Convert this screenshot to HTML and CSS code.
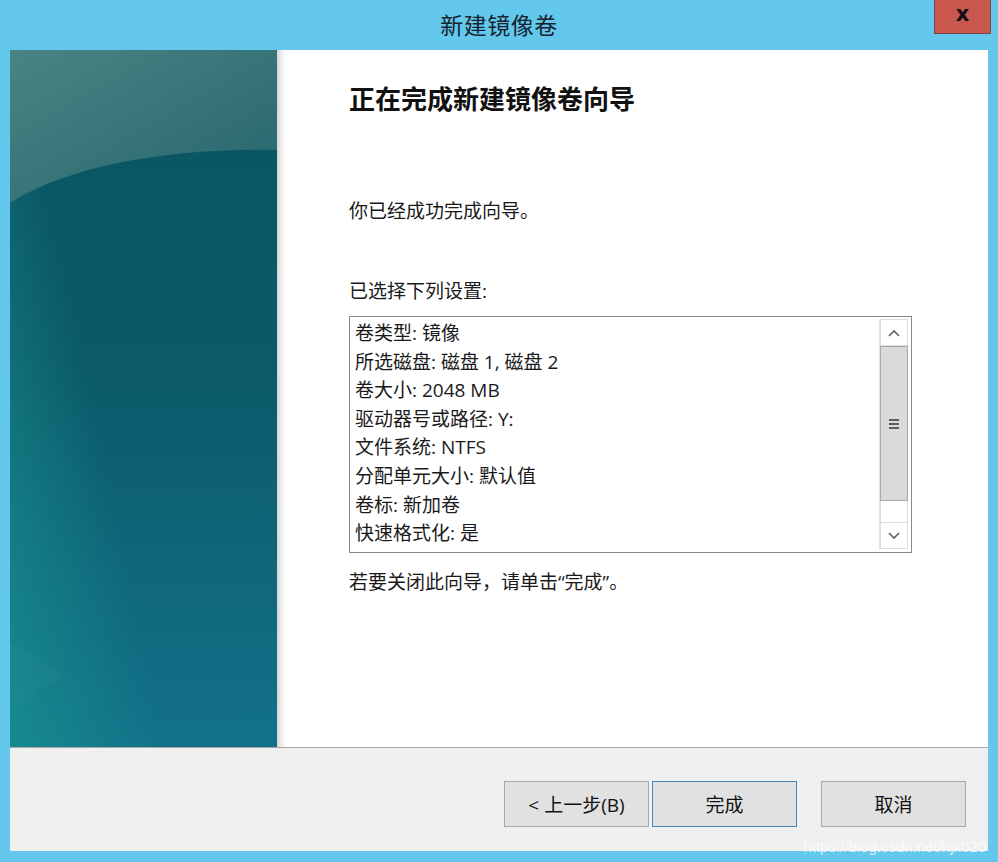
FILE: index.html
```html
<!DOCTYPE html>
<html lang="zh-CN">
<head>
    <meta charset="UTF-8">
    <title>新建镜像卷</title>
    <link rel="stylesheet" href="styles.css">
</head>
<body>
    <div class="window">
        <div class="titlebar">
            <div></div>
            <div class="title">新建镜像卷</div>
            <div class="close">x</div>
        </div>
        <div class="frame">
            <div class="main">
                <div class="side">
                    <svg width="267" height="697" viewBox="0 0 267 697" preserveAspectRatio="none">
                        <defs>
                            <linearGradient id="base" x1="0" y1="0" x2="0" y2="1">
                                <stop offset="0" stop-color="#0a5460"/>
                                <stop offset="0.45" stop-color="#0b5a68"/>
                                <stop offset="1" stop-color="#12718a"/>
                            </linearGradient>
                            <linearGradient id="glow" x1="0" y1="1" x2="0.45" y2="0.75">
                                <stop offset="0" stop-color="#18908f" stop-opacity="0.8"/>
                                <stop offset="1" stop-color="#18908f" stop-opacity="0"/>
                            </linearGradient>
                            <linearGradient id="cap" x1="0" y1="0" x2="1" y2="1">
                                <stop offset="0" stop-color="#4a8484"/>
                                <stop offset="1" stop-color="#25656d"/>
                            </linearGradient>
                        </defs>
                        <rect width="267" height="697" fill="url(#base)"/>
                        <rect width="267" height="697" fill="url(#glow)"/>
                        <path d="M0 592 L55 625 L0 660 Z" fill="#ffffff" opacity="0.02"/>
                        <path d="M0 0 H267 V100 C160 98 60 115 0 153 Z" fill="url(#cap)"/>
                    </svg>
                </div>
                <div class="content">
                    <h1>正在完成新建镜像卷向导</h1>
                    <p class="done">你已经成功完成向导。</p>
                    <p class="caption">已选择下列设置:</p>
                    <div class="listbox">
                        <div class="items">
                            <div>卷类型: 镜像</div>
                            <div>所选磁盘: 磁盘 1, 磁盘 2</div>
                            <div>卷大小: 2048 MB</div>
                            <div>驱动器号或路径: Y:</div>
                            <div>文件系统: NTFS</div>
                            <div>分配单元大小: 默认值</div>
                            <div>卷标: 新加卷</div>
                            <div>快速格式化: 是</div>
                        </div>
                        <div class="scrollbar">
                            <div class="sb-btn">
                                <svg width="12" height="8" viewBox="0 0 12 8"><polyline points="1,7 6,2 11,7" fill="none" stroke="#606060" stroke-width="1.6"/></svg>
                            </div>
                            <div class="sb-thumb">
                                <span></span><span></span><span></span>
                            </div>
                            <div class="sb-track"></div>
                            <div class="sb-btn">
                                <svg width="12" height="8" viewBox="0 0 12 8"><polyline points="1,1 6,6 11,1" fill="none" stroke="#606060" stroke-width="1.6"/></svg>
                            </div>
                        </div>
                    </div>
                    <p class="hint">若要关闭此向导，请单击“完成”。</p>
                </div>
            </div>
            <div class="footer">
                <button class="btn">&lt; 上一步(B)</button>
                <button class="btn default">完成</button>
                <button class="btn cancel">取消</button>
            </div>
        </div>
        <div class="watermark">https://blog.csdn.net/hjx020</div>
    </div>
</body>
</html>
```

FILE: styles.css
```css
:root {
    --frame-blue: #63c8eb;
    --face: #f0f0f0;
    --text: #1a1a1a;
}

body {
    margin: 0;
    font-family: "Segoe UI", "Open Sans", "Noto Sans CJK SC", sans-serif;
    color: var(--text);
    background: var(--frame-blue);
}

.window {
    width: 998px;
    height: 862px;
    position: relative;
    display: flex;
    flex-direction: column;
    background: var(--frame-blue);
}

.titlebar {
    height: 50px;
    display: grid;
    grid-template-columns: 1fr auto 1fr;
}

.title {
    font-family: "Noto Sans CJK SC", sans-serif;
    font-size: 23px;
    line-height: 48px;
    color: #16232e;
    letter-spacing: 0.5px;
}

.close {
    justify-self: end;
    align-self: start;
    width: 55px;
    height: 33px;
    margin-right: 7px;
    background: #c8574d;
    border: 1px solid #7a4440;
    border-top: none;
    color: #111;
    font-family: "DejaVu Sans", sans-serif;
    font-weight: bold;
    font-size: 21px;
    line-height: 28px;
    text-align: center;
}

.frame {
    margin: 0 10px;
    height: 801px;
    display: flex;
    flex-direction: column;
}

.main {
    height: 697px;
    display: flex;
}

.side {
    width: 267px;
    flex: none;
}

.side svg {
    display: block;
}

.content {
    flex: 1;
    background: linear-gradient(90deg, #d4d4d4 0, #f2f2f2 5px, #ffffff 10px);
    padding: 31px 0 0 72px;
}

h1 {
    margin: 0;
    font-family: "Noto Sans CJK SC", sans-serif;
    font-size: 26px;
    line-height: 34px;
    font-weight: bold;
    color: #111;
}

p {
    margin: 0;
    font-size: 19px;
    line-height: 28px;
}

.done {
    margin-top: 82px;
}

.caption {
    margin-top: 52px;
}

.listbox {
    margin-top: 11px;
    width: 563px;
    height: 237px;
    border: 1px solid #8a8a8a;
    padding: 2px 3px 2px 0;
    box-sizing: border-box;
    display: flex;
}

.items {
    flex: 1;
    padding-left: 5px;
    font-size: 19px;
    line-height: 28.6px;
}

.scrollbar {
    width: 28px;
    display: flex;
    flex-direction: column;
    border-left: 1px solid #e3e3e3;
}

.sb-btn {
    height: 27px;
    border: 1px solid #dcdcdc;
    background: #fff;
    display: flex;
    align-items: center;
    justify-content: center;
    box-sizing: border-box;
}

.sb-thumb {
    height: 155px;
    background: #dadada;
    border: 1px solid #a8a8a8;
    box-sizing: border-box;
    display: flex;
    flex-direction: column;
    align-items: center;
    justify-content: center;
    gap: 2px;
}

.sb-thumb span {
    width: 10px;
    height: 2px;
    background: #5e5e5e;
}

.sb-track {
    height: 21px;
    background: #fff;
    border-left: 1px solid #dcdcdc;
    border-right: 1px solid #dcdcdc;
}

.hint {
    margin-top: 15px;
}

.footer {
    flex: 1;
    background: var(--face);
    border-top: 1px solid #a7a7a7;
    display: flex;
    align-items: flex-start;
    justify-content: flex-end;
    padding: 33px 22px 0 0;
}

.btn {
    width: 145px;
    height: 46px;
    margin-left: 3px;
    background: #e1e1e1;
    border: 1px solid #a8a8a8;
    font-family: "Segoe UI", "Open Sans", "Noto Sans CJK SC", sans-serif;
    font-size: 19px;
    color: #111;
    padding: 0;
}

.btn.default {
    border-color: #4b84b8;
}

.btn.cancel {
    margin-left: 24px;
}

.watermark {
    position: absolute;
    right: 12px;
    bottom: 7px;
    font-family: "Liberation Sans", sans-serif;
    font-size: 15px;
    color: rgba(255, 255, 255, 0.75);
}
```
